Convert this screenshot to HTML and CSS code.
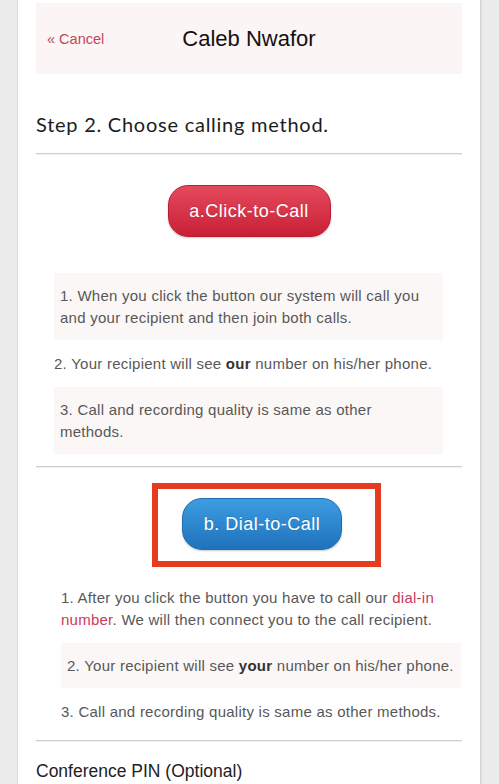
FILE: index.html
```html
<!DOCTYPE html>
<html lang="en">
<head>
    <meta charset="UTF-8">
    <meta name="viewport" content="width=device-width, initial-scale=1.0">
    <title>Call - Caleb Nwafor</title>
    <link rel="stylesheet" href="styles.css">
</head>
<body>
    <div class="page">
        <div class="call-header">
            <a href="#" class="cancel-link">&laquo; Cancel</a>
            <h1>Caleb Nwafor</h1>
            <span></span>
        </div>

        <h2 class="step-title">Step 2. Choose calling method.</h2>
        <div class="divider"></div>

        <div class="method method-click">
            <div class="button-row">
                <button class="call-button call-red">a.Click-to-Call</button>
            </div>
            <ul class="notes">
                <li class="shaded">1. When you click the button our system will call you and your recipient and then join both calls.</li>
                <li>2. Your recipient will see <b>our</b> number on his/her phone.</li>
                <li class="shaded">3. Call and recording quality is same as other methods.</li>
            </ul>
        </div>
        <div class="divider"></div>

        <div class="method method-dial">
            <div class="highlight">
                <button class="call-button call-blue">b. Dial-to-Call</button>
            </div>
            <ul class="notes">
                <li>1. After you click the button you have to call our <a href="#" class="dial-link">dial-in number</a>. We will then connect you to the call recipient.</li>
                <li class="shaded">2. Your recipient will see <b>your</b> number on his/her phone.</li>
                <li>3. Call and recording quality is same as other methods.</li>
            </ul>
        </div>
        <div class="divider"></div>

        <label class="pin-label" for="pin">Conference PIN (Optional)</label>
    </div>
</body>
</html>
```

FILE: styles.css
```css
body {
    margin: 0;
    background-color: #ececec;
    font-family: "Liberation Sans", Arial, sans-serif;
    color: #222;
}

.page {
    width: 426px;
    min-height: 784px;
    margin: 0 17px;
    padding: 3px 18px 0;
    background-color: #fff;
    border-left: 1px solid #dcdcdc;
    border-right: 1px solid #d4d4d4;
    box-shadow: 1px 0 2px rgba(0, 0, 0, 0.06);
}

.call-header {
    display: grid;
    grid-template-columns: 1fr auto 1fr;
    align-items: center;
    height: 71px;
    padding: 0 11px;
    background-color: #fbf6f5;
}

.cancel-link {
    color: #c5455a;
    font-size: 14.5px;
    text-decoration: none;
}

.call-header h1 {
    margin: 0;
    font-size: 22px;
    font-weight: normal;
    color: #111;
}

.step-title {
    margin: 38px 0 17px;
    font-family: "Lato", sans-serif;
    font-size: 20px;
    line-height: 24px;
    font-weight: normal;
    letter-spacing: 0.75px;
    color: #1c1c1c;
}

.divider {
    height: 1px;
    background-color: #cfcfcf;
    border-bottom: 1px solid #f0f0f0;
}

.button-row {
    padding: 30px 0 36px;
    text-align: center;
}

.call-button {
    height: 52px;
    padding: 0;
    border-radius: 20px;
    font-family: "Liberation Sans", Arial, sans-serif;
    font-size: 18px;
    letter-spacing: 0.5px;
    white-space: nowrap;
    text-align: center;
    color: #fff;
    text-shadow: 0 -1px 0 rgba(0, 0, 0, 0.15);
    cursor: pointer;
}

.call-red {
    width: 163px;
    border: 1px solid #b81d31;
    background: linear-gradient(#e54a5c, #c91f36);
    box-shadow: 0 1px 2px rgba(0, 0, 0, 0.2);
}

.call-blue {
    display: block;
    width: 160px;
    border: 1px solid #1d6bb0;
    background: linear-gradient(#3d9de2, #1f72bb);
    box-shadow: 0 1px 2px rgba(0, 0, 0, 0.2);
}

.notes {
    list-style: none;
    margin: 0;
    padding: 0;
    font-size: 15px;
    line-height: 22px;
    letter-spacing: 0.25px;
    color: #585858;
}

.notes li {
    padding: 12px 6px 11px 0;
}

.notes li + li {
    margin-top: 1px;
}

.notes li.shaded {
    padding-left: 6px;
    background-color: #fbf7f6;
}

.notes b {
    color: #333;
}

.method-click .notes {
    margin: 0 19px 12px 18px;
}

.method-dial {
    padding: 15px 0 6px;
}

.highlight {
    width: fit-content;
    margin-left: 116px;
    padding: 9px 33px 11px 24px;
    border: 6px solid #e63b1f;
}

.method-dial .notes {
    margin: 8px 1px 0 25px;
}

.dial-link {
    color: #c83a5c;
    text-decoration: none;
}

.pin-label {
    display: block;
    margin-top: 17px;
    font-size: 17.5px;
    line-height: 24px;
    color: #222;
}
```
